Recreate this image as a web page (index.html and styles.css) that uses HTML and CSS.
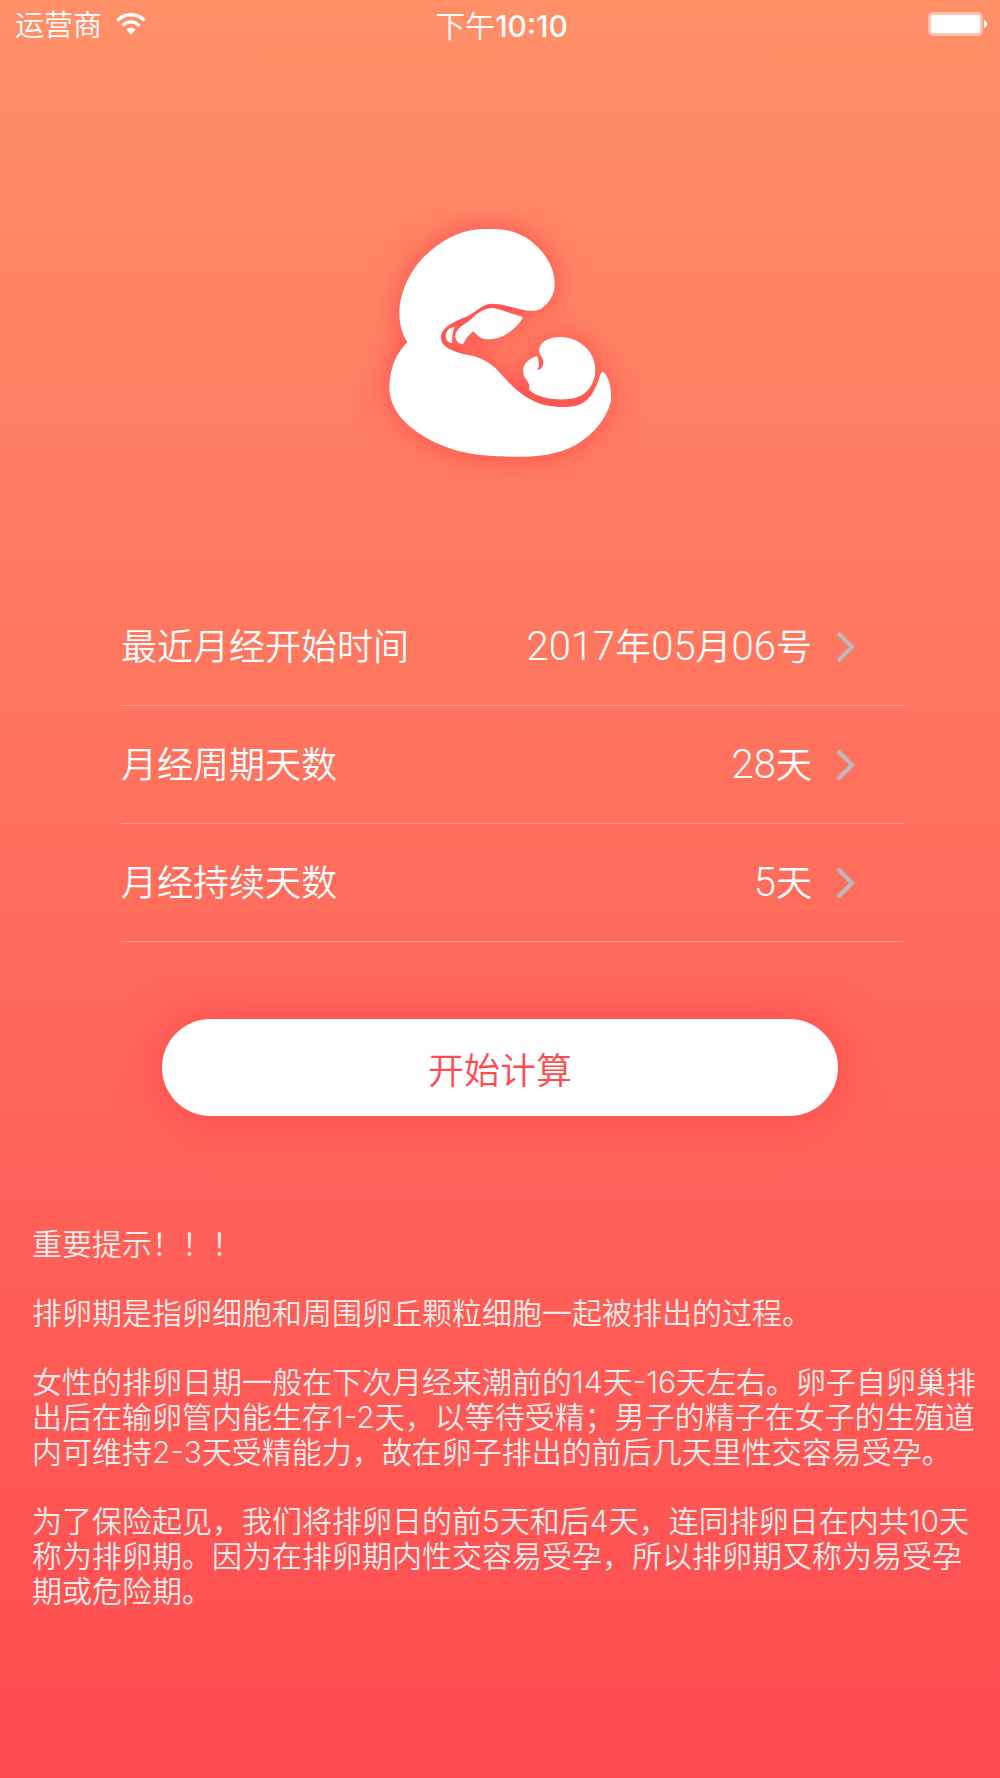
FILE: index.html
```html
<!DOCTYPE html>
<html lang="zh-CN">
<head>
    <meta charset="UTF-8">
    <meta name="viewport" content="width=device-width, initial-scale=1.0">
    <title>排卵期计算</title>
    <link rel="stylesheet" href="styles.css">
</head>
<body>
    <header class="status-bar">
        <div class="carrier">
            <span>运营商</span>
            <svg class="wifi" viewBox="0 0 30 22" aria-hidden="true">
                <path d="M1.5 7.5 C9 -0.2 21 -0.2 28.5 7.5" fill="none" stroke="#fff" stroke-width="3.4"/>
                <path d="M6.5 12.6 C11.5 7.6 18.5 7.6 23.5 12.6" fill="none" stroke="#fff" stroke-width="3.4"/>
                <path d="M10.2 16.6 C13 14 17 14 19.8 16.6 L15 21.6 Z" fill="#fff"/>
            </svg>
        </div>
        <time class="clock">下午<b>10:10</b></time>
        <svg class="battery" viewBox="0 0 60 24" aria-hidden="true">
            <rect x="1" y="1" width="53" height="22" rx="4" fill="none" stroke="#fff" stroke-opacity="0.6" stroke-width="1.5"/>
            <rect x="2.5" y="2.5" width="50" height="19" rx="2" fill="#fff"/>
            <path d="M56 8 C60 9 60 15 56 16 Z" fill="#fff"/>
        </svg>
    </header>

    <main>
        <svg class="logo" viewBox="0 0 780 780" aria-hidden="true">
            <g fill="#fff">
                <path d="M112 396 C96 372 88 342 88 308 C90 240 125 170 180 124 C235 76 290 57 345 57 C400 55 432 62 465 81 C515 112 556 165 554 226 C554 254 535 282 513 297 C504 302 490 303 474 302 C440 297 400 281 366 281 C340 282 325 299 300 315 C270 330 213 345 213 383 C214 411 245 424 290 434 C325 440 350 450 376 474 C410 508 435 545 485 570 C525 592 580 595 620 587 C662 575 678 535 692 492 C694 485 699 484 703 488 C719 506 724 535 723 574 C710 625 670 675 617 705 C560 737 490 742 420 740 C330 738 260 730 185 692 C105 650 58 597 58 530 C60 470 80 430 112 396 Z"/>
                <path d="M458 320 C458 332 430 360 405 375 C385 386 366 388 350 388 C332 387 322 376 310 364 C295 376 288 386 279 403 C266 403 255 392 256 376 C260 352 285 343 304 327 C325 306 345 294 368 294 C400 299 428 314 458 320 Z"/>
                <path d="M254 351 C236 352 227 365 227 379 C229 393 237 401 247 399 C246 382 247 366 254 351 Z"/>
                <path d="M501 438 C506 450 511 467 502 480 C515 479 520 467 520 455 C518 441 507 434 507 420 C510 394 540 381 570 381 C630 382 676 425 676 480 C676 518 654 550 622 562 C585 574 510 570 477 539 C480 526 477 521 470 511 C448 479 463 450 501 438 Z"/>
            </g>
        </svg>

        <ul class="settings">
            <li>
                <button type="button" class="row">
                    <span class="label">最近月经开始时间</span>
                    <span class="value"><i>2017</i>年<i>05</i>月<i>06</i>号</span>
                    <svg class="chevron" viewBox="0 0 20 32" aria-hidden="true"><path d="M2 2 L16 16 L2 30"/></svg>
                </button>
            </li>
            <li>
                <button type="button" class="row">
                    <span class="label">月经周期天数</span>
                    <span class="value"><i>28</i>天</span>
                    <svg class="chevron" viewBox="0 0 20 32" aria-hidden="true"><path d="M2 2 L16 16 L2 30"/></svg>
                </button>
            </li>
            <li>
                <button type="button" class="row">
                    <span class="label">月经持续天数</span>
                    <span class="value"><i>5</i>天</span>
                    <svg class="chevron" viewBox="0 0 20 32" aria-hidden="true"><path d="M2 2 L16 16 L2 30"/></svg>
                </button>
            </li>
        </ul>

        <button type="button" class="start">开始计算</button>

        <section class="tips">
            <p>重要提示！！！</p>
            <p>排卵期是指卵细胞和周围卵丘颗粒细胞一起被排出的过程。</p>
            <p>女性的排卵日期一般在下次月经来潮前的14天-16天左右。卵子自卵巢排出后在输卵管内能生存1-2天，以等待受精；男子的精子在女子的生殖道内可维持2-3天受精能力，故在卵子排出的前后几天里性交容易受孕。</p>
            <p>为了保险起见，我们将排卵日的前5天和后4天，连同排卵日在内共10天称为排卵期。因为在排卵期内性交容易受孕，所以排卵期又称为易受孕期或危险期。</p>
        </section>
    </main>
</body>
</html>
```

FILE: styles.css
```css
* {
    box-sizing: border-box;
}

body {
    margin: 0;
    min-height: 100vh;
    font-family: Inter, 'Noto Sans CJK SC', sans-serif;
    font-weight: 350;
    color: #fff;
    background: linear-gradient(#ff9068, #ff4b50);
}

/* Status bar */
.status-bar {
    display: grid;
    grid-template-columns: 1fr auto 1fr;
    align-items: center;
    height: 52px;
    padding: 0 12px 0 15px;
    font-size: 29px;
    line-height: 40px;
}

.carrier {
    display: flex;
    align-items: center;
    gap: 14px;
}

.wifi {
    width: 30px;
    height: 22px;
    margin-bottom: 4px;
}

.clock {
    font-size: 30px;
}

.clock b {
    font-weight: 500;
}

.battery {
    justify-self: end;
    width: 60px;
    height: 24px;
    margin-bottom: 4px;
}

main {
    display: flex;
    flex-direction: column;
}

.logo {
    align-self: center;
    width: 260px;
    height: 260px;
    margin-top: 158px;
    overflow: visible;
    filter: drop-shadow(0 0 16px #ff4b50);
}

/* Settings list */
.settings {
    list-style: none;
    margin: 118px 96px 0 121px;
    padding: 0;
}

.row {
    display: flex;
    align-items: center;
    width: 100%;
    height: 118px;
    padding: 0 48px 0 0;
    border: 0;
    border-bottom: 1px solid rgba(255, 255, 255, 0.3);
    background: none;
    color: inherit;
    font: inherit;
    font-size: 36px;
    line-height: 48px;
}

.label {
    flex: 1;
    text-align: left;
}

.value i {
    font-family: Roboto, sans-serif;
    font-size: 40px;
    font-style: normal;
    font-weight: 300;
}

.chevron {
    width: 20px;
    height: 32px;
    margin-left: 24px;
    fill: none;
    stroke: #bbbac1;
    stroke-width: 4;
}

.start {
    height: 97px;
    margin: 77px 162px 0;
    border: 0;
    border-radius: 49px;
    background: #fff;
    box-shadow: 0 0 44px 4px #ff4b50;
    color: #ff4b50;
    font: inherit;
    font-size: 36px;
}

/* Tips */
.tips {
    display: flex;
    flex-direction: column;
    gap: 34px;
    margin-top: 111px;
    padding: 0 20px 40px 32px;
    font-size: 30px;
    line-height: 35px;
    color: #ebebeb;
}

.tips p {
    margin: 0;
}
```
